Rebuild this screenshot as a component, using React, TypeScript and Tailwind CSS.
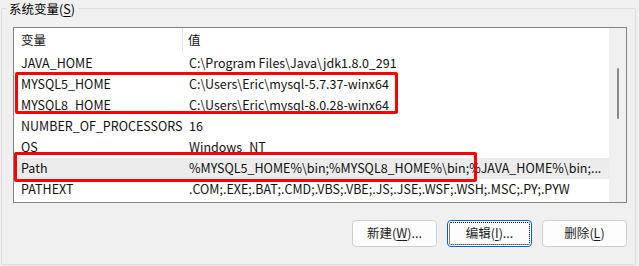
import React from "react";

type EnvVar = {
  name: string;
  value: string;
  selected?: boolean;
};

const vars: EnvVar[] = [
  { name: "JAVA_HOME", value: "C:\\Program Files\\Java\\jdk1.8.0_291" },
  { name: "MYSQL5_HOME", value: "C:\\Users\\Eric\\mysql-5.7.37-winx64" },
  { name: "MYSQL8_HOME", value: "C:\\Users\\Eric\\mysql-8.0.28-winx64" },
  { name: "NUMBER_OF_PROCESSORS", value: "16" },
  { name: "OS", value: "Windows_NT" },
  { name: "Path", value: "%MYSQL5_HOME%\\bin;%MYSQL8_HOME%\\bin;%JAVA_HOME%\\bin;...", selected: true },
  { name: "PATHEXT", value: ".COM;.EXE;.BAT;.CMD;.VBS;.VBE;.JS;.JSE;.WSF;.WSH;.MSC;.PY;.PYW" },
];

const font = "font-['Noto_Sans_CJK_SC','Noto_Sans',sans-serif]";

const DialogButton: React.FC<{ label: string; hotkey: string; suffix: string; focused?: boolean }> = ({
  label,
  hotkey,
  suffix,
  focused,
}) => {
  return (
    <button
      className={
        focused
          ? "w-[85px] h-[27px] rounded-[4px] border border-[#0067c0] bg-[#fdfdfd] text-[12.5px] text-[#1a1a1a] outline-1 outline-dotted outline-black outline-offset-[-3px]"
          : "w-[85px] h-[27px] rounded-[4px] border border-[#d0d0d0] bg-[#fdfdfd] text-[12.5px] text-[#1a1a1a]"
      }
    >
      {label}(<span className="underline underline-offset-2">{hotkey}</span>){suffix}
    </button>
  );
};

export default function App() {
  return (
    <div className={`relative w-[639px] h-[266px] bg-[#f0f0f0] text-[#111] ${font}`}>
      <div className="pl-[1px] pt-[8px]">
        {/* group box */}
        <div className="relative w-[635px] h-[257px] border border-[#dcdcdc] rounded-[2px]">
          <div className="absolute left-[4px] top-[-8px] bg-[#f0f0f0] px-[3px] text-[12.5px] leading-[16px] text-black">
            系统变量(<span className="underline underline-offset-2">S</span>)
          </div>

          <div className="pl-[11px] pt-[18px] flex flex-col">
            {/* list view */}
            <div className="w-[614px] h-[176px] border border-[#838383] bg-white flex">
              <div className="flex-1 min-w-0 flex flex-col">
                <div className="h-[25px] flex items-center text-[12.5px]">
                  <div className="w-[169px] shrink-0 h-full flex items-center pl-[7px] border-r border-[#e5e5e5]">变量</div>
                  <div className="pl-[5px]">值</div>
                </div>
                {vars.map((v) => (
                  <div
                    key={v.name}
                    className={
                      v.selected
                        ? "h-[21px] flex items-center text-[12.5px] bg-[#ececec] whitespace-nowrap"
                        : "h-[21px] flex items-center text-[12.5px] whitespace-nowrap"
                    }
                  >
                    <div className="w-[175px] shrink-0 pl-[7px]">{v.name}</div>
                    <div className="min-w-0 overflow-hidden">{v.value}</div>
                  </div>
                ))}
              </div>
              {/* scrollbar */}
              <div className="w-[17px] shrink-0 bg-[#f0f0f0] flex justify-center pt-[40px]">
                <div className="w-[2px] h-[51px] bg-[#8a8a8a] rounded-full" />
              </div>
            </div>

            {/* buttons */}
            <div className="w-[614px] flex justify-end gap-[10px] pt-[17px]">
              <DialogButton label="新建" hotkey="W" suffix="..." />
              <DialogButton label="编辑" hotkey="I" suffix="..." focused />
              <DialogButton label="删除" hotkey="L" suffix="" />
            </div>
          </div>
        </div>
      </div>

      {/* red annotation boxes */}
      <div className="absolute left-[15px] top-[72px] w-[383px] h-[42px] border-[3px] border-[#ff0000] rounded-[2px]" />
      <div className="absolute left-[14px] top-[152px] w-[463px] h-[30px] border-[3px] border-[#ff0000] rounded-[2px]" />
    </div>
  );
}
